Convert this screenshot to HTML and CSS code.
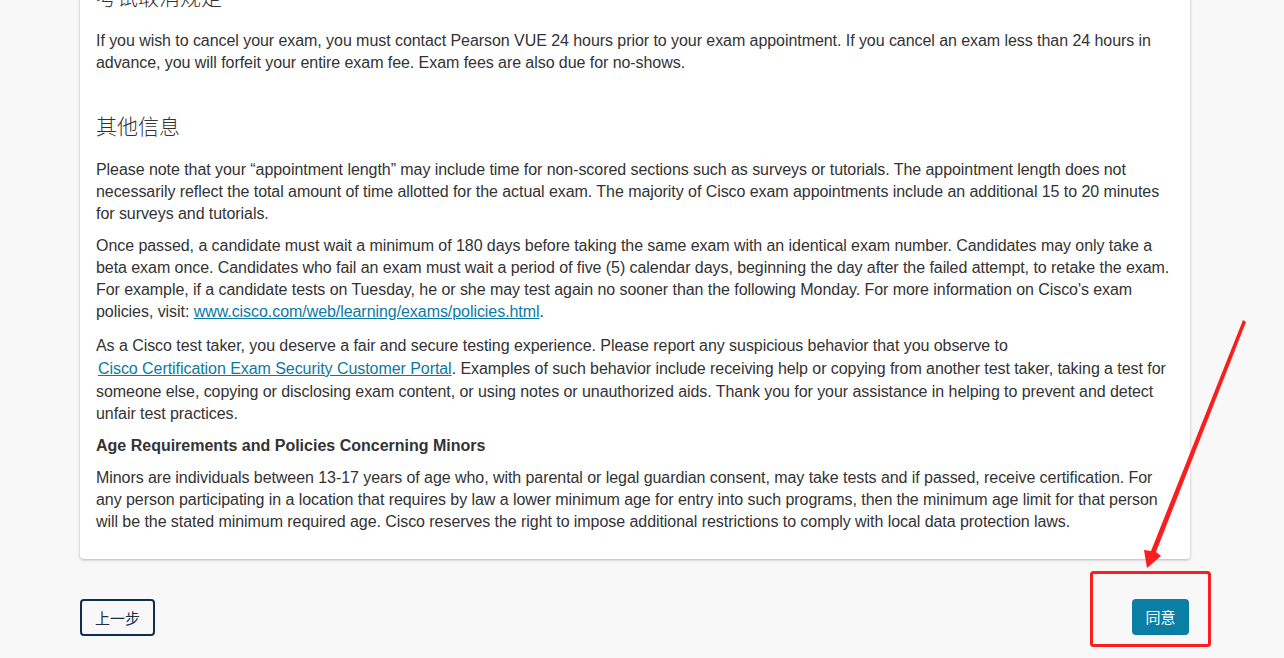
FILE: index.html
```html
<!DOCTYPE html>
<html lang="zh-CN">
<head>
<meta charset="utf-8">
<title>考试政策</title>
<link rel="stylesheet" href="styles.css">
</head>
<body>
<div class="page">
  <div class="card">
    <h3 class="section-title">考试取消规定</h3>
    <p>If you wish to cancel your exam, you must contact Pearson VUE 24 hours prior to your exam appointment. If you cancel an exam less than 24 hours in advance, you will forfeit your entire exam fee. Exam fees are also due for no-shows.</p>
    <h3 class="section-title">其他信息</h3>
    <p>Please note that your “appointment length” may include time for non-scored sections such as surveys or tutorials. The appointment length does not necessarily reflect the total amount of time allotted for the actual exam. The majority of Cisco exam appointments include an additional 15 to 20 minutes for surveys and tutorials.</p>
    <p>Once passed, a candidate must wait a minimum of 180 days before taking the same exam with an identical exam number. Candidates may only take a beta exam once. Candidates who fail an exam must wait a period of five (5) calendar days, beginning the day after the failed attempt, to retake the exam. For example, if a candidate tests on Tuesday, he or she may test again no sooner than the following Monday. For more information on Cisco's exam policies, visit: <a class="link link-policies" href="#">www.cisco.com/web/learning/exams/policies.html</a>.</p>
    <p>As a Cisco test taker, you deserve a fair and secure testing experience. Please report any suspicious behavior that you observe to <a class="link link-portal" href="#">Cisco Certification Exam Security Customer Portal</a>. Examples of such behavior include receiving help or copying from another test taker, taking a test for someone else, copying or disclosing exam content, or using notes or unauthorized aids. Thank you for your assistance in helping to prevent and detect unfair test practices.</p>
    <p class="strong">Age Requirements and Policies Concerning Minors</p>
    <p>Minors are individuals between 13-17 years of age who, with parental or legal guardian consent, may take tests and if passed, receive certification. For any person participating in a location that requires by law a lower minimum age for entry into such programs, then the minimum age limit for that person will be the stated minimum required age. Cisco reserves the right to impose additional restrictions to comply with local data protection laws.</p>
  </div>
  <div class="actions">
    <button class="btn btn-outline">上一步</button>
    <button class="btn btn-primary">同意</button>
  </div>
</div>
<svg class="annotation" width="1284" height="658" viewBox="0 0 1284 658">
  <rect x="1091.5" y="572.5" width="118" height="73" rx="2" fill="none" stroke="#fa1e1e" stroke-width="3"/>
  <polygon points="1243,320 1246,322 1156,552 1161,556 1147,568 1144,550 1151,551" fill="#fa1e1e"/>
</svg>
</body>
</html>
```

FILE: styles.css
```css
html, body {
  margin: 0;
  padding: 0;
  background: #f8f8f8;
  overflow: hidden;
}

body {
  font-family: "Liberation Sans", Arial, "Noto Sans CJK SC", sans-serif;
  color: #333;
  font-size: 16px;
  line-height: 22px;
  position: relative;
  width: 1284px;
  height: 658px;
}

.page {
  margin-top: -34px;
  padding-left: 80px;
  width: 1110px;
}

.card {
  background: #fff;
  border-radius: 4px;
  box-shadow: 0 1px 3px rgba(0, 0, 0, 0.28);
  padding: 16px 16px 16px;
}

.section-title {
  font-family: "Noto Sans CJK SC", "Liberation Sans", sans-serif;
  font-weight: 300;
  font-size: 21px;
  line-height: 28px;
  color: #333;
  margin: 37px 0 20px;
}

.card > .section-title:first-child {
  margin-top: 0;
}

.card p {
  margin: 0 0 10px;
  letter-spacing: -0.06px;
}

.card p.strong {
  font-weight: bold;
  letter-spacing: 0;
}

.link {
  color: #0b7aa3;
  text-decoration: underline;
  display: inline-block;
  line-height: 22px;
}

.link-policies {
  padding-bottom: 2px;
}

.link-portal {
  margin-left: 2px;
  padding: 1px 0;
}

.actions {
  display: flex;
  justify-content: space-between;
  align-items: flex-start;
  margin-top: 40px;
}

.btn {
  font-family: "Noto Sans CJK SC", "Liberation Sans", sans-serif;
  font-size: 15px;
  line-height: 20px;
  border-radius: 4px;
  cursor: pointer;
}

.btn-outline {
  background: transparent;
  border: 2px solid #0d2f52;
  color: #1e2f44;
  height: 37px;
  width: 75px;
  padding: 0;
}

.btn-primary {
  background: #0a7fa3;
  border: none;
  color: #fff;
  height: 36px;
  width: 57px;
  padding: 0;
  margin-right: 1px;
}

.annotation {
  position: absolute;
  left: 0;
  top: 0;
  pointer-events: none;
}
```
